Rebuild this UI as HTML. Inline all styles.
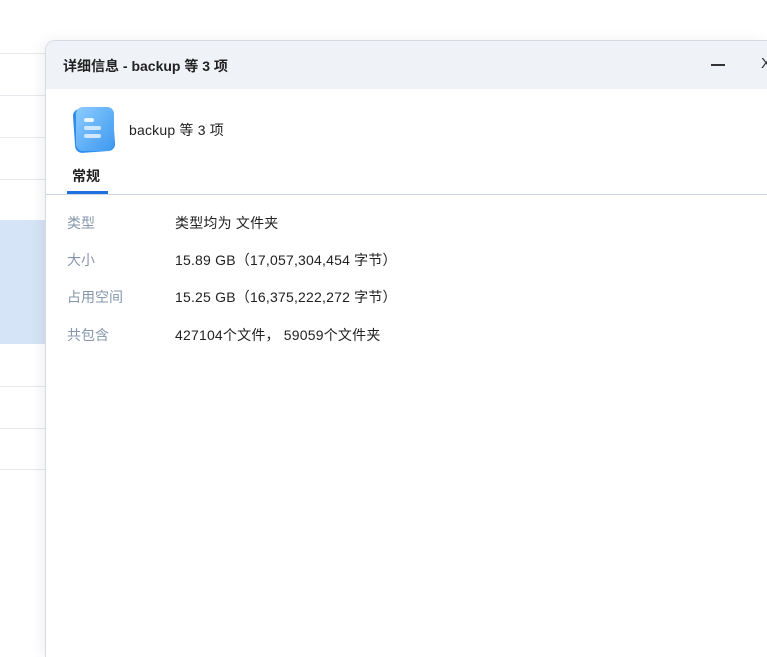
<!DOCTYPE html>
<html style="height:657px;overflow:hidden"><head><meta charset="utf-8"><style>
*{margin:0;padding:0;box-sizing:border-box}
body{width:767px;height:657px;overflow:hidden;background:#fff;position:relative;font-family:"Liberation Sans","Noto Sans CJK SC",sans-serif}
.l{position:absolute;left:0;width:46px;height:1px;background:#e6e9ee}
.sel{position:absolute;left:0;top:220px;width:46px;height:124px;background:#d5e4f6}
.dlg{position:absolute;left:45px;top:40px;width:722px;height:617px;background:#fff;border:1px solid #d6dbe2;border-right:none;border-bottom:none;border-radius:10px 0 0 0;box-shadow:-4px 0 14px rgba(0,0,0,.06);overflow:hidden}
.tb{height:48px;background:#eff3f8;position:relative}
.tt{position:absolute;left:17px;top:15px;font-size:14px;font-weight:bold;color:#222}
.min{position:absolute;left:665px;top:23px;width:14px;height:1.5px;background:#333}
.x{position:absolute;left:715px;top:14px;font-size:15px;color:#333}
.icon{position:absolute;left:26px;top:64px}
.name{position:absolute;left:83px;top:79px;font-size:14px;color:#222;letter-spacing:.2px}
.tab{position:absolute;left:26px;top:125px;font-size:14px;font-weight:bold;color:#222}
.ul{position:absolute;left:21px;top:150px;width:41px;height:3px;background:#1f6fe0}
.sep{position:absolute;left:0;top:153px;width:100%;height:1px;background:#cbd6e3}
.k{position:absolute;left:21px;font-size:14px;color:#8596ad}
.v{position:absolute;left:129px;font-size:14px;color:#222;letter-spacing:.2px}
</style></head><body>
<div class="l" style="top:53px"></div><div class="l" style="top:95px"></div><div class="l" style="top:137px"></div><div class="l" style="top:179px"></div>
<div class="sel"></div>
<div class="l" style="top:386px"></div><div class="l" style="top:428px"></div><div class="l" style="top:469px"></div>
<div class="dlg">
<div class="tb"><div class="tt">详细信息 - backup 等 3 项</div><div class="min"></div><div class="x">X</div></div>
<svg class="icon" width="46" height="50" viewBox="0 0 46 50"><defs><linearGradient id="g" x1="0" y1="0" x2="1" y2="1"><stop offset="0" stop-color="#8cccff"/><stop offset="1" stop-color="#3d98f0"/></linearGradient></defs>
<rect x="2" y="3" width="40" height="44" rx="7" fill="#2d8ef0" transform="rotate(-4 22 25)"/>
<rect x="4" y="2" width="38" height="44" rx="7" fill="url(#g)"/>
<rect x="12" y="13" width="10" height="4" rx="2" fill="#e8f4ff"/>
<rect x="12" y="21" width="17" height="4" rx="2" fill="#cfe7ff"/>
<rect x="12" y="29" width="17" height="4" rx="2" fill="#cfe7ff"/></svg>
<div class="name">backup 等 3 项</div>
<div class="tab">常规</div><div class="ul"></div><div class="sep"></div>
<div class="k" style="top:172px">类型</div><div class="v" style="top:172px">类型均为 文件夹</div>
<div class="k" style="top:209px">大小</div><div class="v" style="top:209px">15.89 GB（17,057,304,454 字节）</div>
<div class="k" style="top:246px">占用空间</div><div class="v" style="top:246px">15.25 GB（16,375,222,272 字节）</div>
<div class="k" style="top:284px">共包含</div><div class="v" style="top:284px">427104个文件， 59059个文件夹</div>
</div>
</body></html>
